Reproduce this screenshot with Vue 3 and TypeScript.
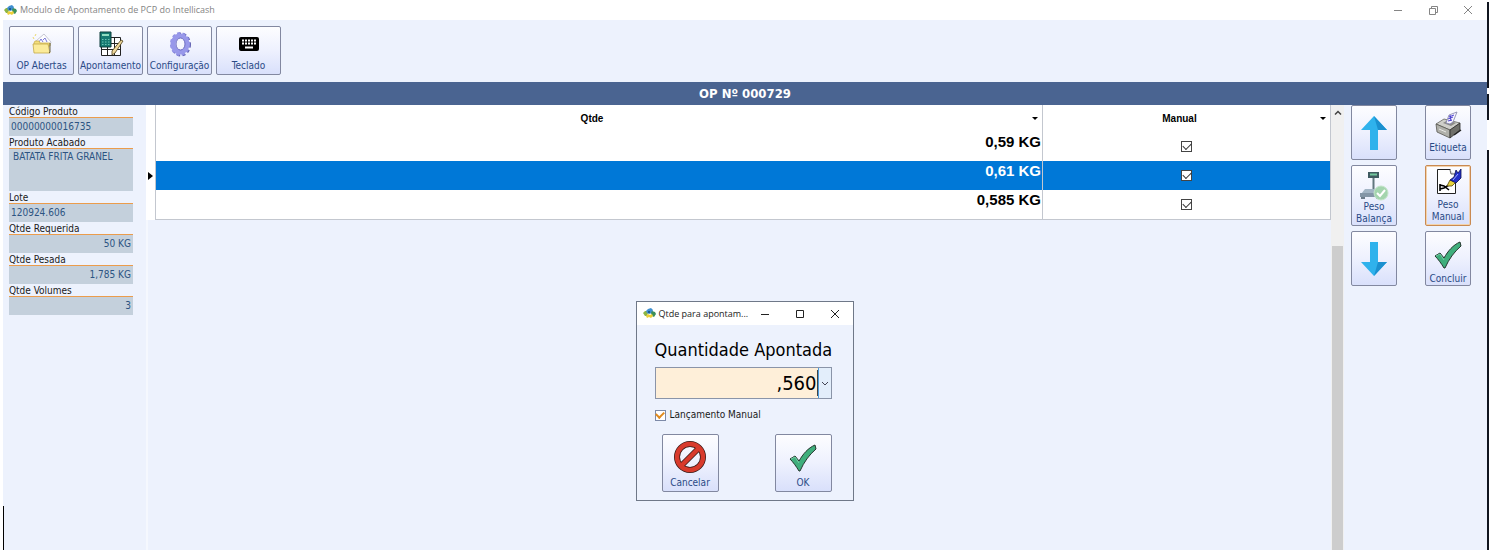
<script setup lang="ts">
import { ref } from 'vue'

interface Field {
  id: string
  label: string
  value: string
  kind: 'text' | 'memo' | 'number'
}

interface Weighing {
  qty: string
  manual: boolean
}

const fields: Field[] = [
  { id: 'codigo', label: 'Código Produto', value: '00000000016735', kind: 'text' },
  { id: 'produto', label: 'Produto Acabado', value: 'BATATA FRITA GRANEL', kind: 'memo' },
  { id: 'lote', label: 'Lote', value: '120924.606', kind: 'text' },
  { id: 'requerida', label: 'Qtde Requerida', value: '50 KG', kind: 'number' },
  { id: 'pesada', label: 'Qtde Pesada', value: '1,785 KG', kind: 'number' },
  { id: 'volumes', label: 'Qtde Volumes', value: '3', kind: 'number' },
]

const rows = ref<Weighing[]>([
  { qty: '0,59 KG', manual: true },
  { qty: '0,61 KG', manual: true },
  { qty: '0,585 KG', manual: true },
])
const selected = ref(1)
const amount = ref(',560')
const manualEntry = ref(true)
</script>

<template>
  <div class="screen">
    <svg class="defs" width="0" height="0" aria-hidden="true">
      <defs>
        <symbol id="logo" viewBox="0 0 13 11">
          <path d="M0 5l2-2 2 0 1 2-1 3-2 0z" fill="#8db545" />
          <path d="M3 3l2-2 3-1 2 2-1 3-3 1-2-1z" fill="#3f8fd0" />
          <path d="M9 3l3 1 1 2-2 3-2-1-1-3z" fill="#3c8f5a" />
          <path d="M3 8l2-2 2 1 2-1 1 2-2 2-2-1-2 1z" fill="#edcf3a" />
          <path d="M5 3h2v2H5z" fill="#1c5d91" />
        </symbol>
        <symbol id="check" viewBox="0 0 28 28">
          <path d="M1 15l5-3 4 5C14 10 19 4 26 1l1 4C20 11 15 18 11 27h-1C7 22 4 18 1 15z" fill="#3fae7c" stroke="#24352d" stroke-width="1" stroke-linejoin="round" />
          <path d="M2 15l4-2 4 6" fill="none" stroke="#76cda5" stroke-width="1" />
        </symbol>
        <symbol id="arrow" viewBox="0 0 26 34">
          <path d="M13 0l13 14h-9v20H9V14H0z" fill="#2fb2ec" />
          <path d="M13 0l13 14h-9z" fill="#1b90cf" />
        </symbol>
        <symbol id="minus" viewBox="0 0 10 10"><path d="M1 5.5h8" stroke="currentColor" fill="none" /></symbol>
        <symbol id="cross" viewBox="0 0 10 10"><path d="M1 1l8 8M9 1l-8 8" stroke="currentColor" fill="none" /></symbol>
      </defs>
    </svg>

    <div class="window">
      <header class="titlebar">
        <svg class="logo"><use href="#logo" /></svg>
        <h1>Modulo de Apontamento de PCP do Intellicash</h1>
        <button class="caption" aria-label="Minimizar"><svg><use href="#minus" /></svg></button>
        <button class="caption" aria-label="Restaurar">
          <svg viewBox="0 0 10 10"><path d="M1.5 3.5h6v6h-6zM3.500 3V1.500h6v6H8" stroke="currentColor" fill="none" /></svg>
        </button>
        <button class="caption" aria-label="Fechar"><svg><use href="#cross" /></svg></button>
      </header>

      <nav class="toolbar">
        <button class="tile">
          <svg class="icon" viewBox="0 0 26 26">
            <path d="M7 10l8-7 7 8-3 9H8z" fill="#fdfdff" stroke="#b9b9c6" stroke-width=".8" />
            <path d="M10 11l2-3 2 3m0-2l2-2 2 4" stroke="#7b79d6" fill="none" />
            <path d="M5 12l1-2h4l1 2h10v3H5z" fill="#f3de7c" stroke="#c9ae4e" stroke-width=".8" />
            <path d="M4 13h15l2 9H5z" fill="#fbeb9a" stroke="#c4aa4a" stroke-width=".8" />
            <path d="M21 12v9l-1 1" stroke="#6b6448" fill="none" />
            <path d="M7 3l-1 2m-2 1l1 2" stroke="#ecd96e" fill="none" />
          </svg>
          <span>OP Abertas</span>
        </button>
        <button class="tile">
          <svg class="icon" viewBox="0 0 26 26">
            <path d="M3.500 6.500h19v18h-19zM4 12.500h18M4 18.500h18M9.500 6v18M16.500 6v18" fill="#fff" stroke="#222" />
            <path d="M2 1h11v15H2z" fill="#157a72" stroke="#0c3c3a" />
            <path d="M4 3h7v2H4z" fill="#8fdcc0" />
            <path d="M4 8.500h8M4 11h8M4 13.500h8" stroke="#6cc4b4" stroke-dasharray="1.500 1.500" />
            <path d="M23 9l2 1-8 12-3 2v-4z" fill="#eed79a" stroke="#4b3d18" stroke-width=".8" />
          </svg>
          <span>Apontamento</span>
        </button>
        <button class="tile">
          <svg class="icon" viewBox="0 0 26 26">
            <ellipse cx="14" cy="13.500" rx="9" ry="11" fill="none" stroke="#6464b4" stroke-width="2" stroke-dasharray="3 2.500" />
            <ellipse cx="13" cy="13" rx="9" ry="11" fill="none" stroke="#8f90e4" stroke-width="2" stroke-dasharray="3 2.500" />
            <ellipse cx="13" cy="13" rx="7" ry="8" fill="none" stroke="#9898ea" stroke-width="5" />
            <ellipse cx="13.500" cy="13" rx="4.500" ry="6" fill="#f5f6fe" stroke="#6c6cc0" />
          </svg>
          <span>Configuração</span>
        </button>
        <button class="tile">
          <svg class="icon" viewBox="0 0 26 26">
            <rect x="3" y="6" width="20" height="14" rx="2" fill="#000" />
            <path d="M6 9.500h14M6 12.500h14" stroke="#fff" stroke-width="2" stroke-dasharray="2 1" />
            <path d="M9 16.500h8" stroke="#fff" stroke-width="2" />
          </svg>
          <span>Teclado</span>
        </button>
      </nav>

      <h2 class="banner">OP Nº 000729</h2>

      <main class="body">
        <form class="side">
          <div v-for="f in fields" :key="f.id" class="field">
            <label :for="f.id">{{ f.label }}</label>
            <textarea v-if="f.kind === 'memo'" :id="f.id" class="box memo" :value="f.value" readonly></textarea>
            <input v-else :id="f.id" class="box" :class="f.kind" type="text" :value="f.value" readonly />
          </div>
        </form>

        <section class="grid">
          <table>
            <colgroup>
              <col class="c-mark" />
              <col />
              <col class="c-manual" />
            </colgroup>
            <thead>
              <tr>
                <th class="mark"></th>
                <th><div class="head"><span>Qtde</span><button aria-label="Filtrar Qtde"></button></div></th>
                <th><div class="head"><span>Manual</span><button aria-label="Filtrar Manual"></button></div></th>
              </tr>
            </thead>
            <tbody>
              <tr v-for="(r, i) in rows" :key="i" :class="{ current: i === selected }" @click="selected = i">
                <td class="mark"><i v-if="i === selected"></i></td>
                <td class="qty">{{ r.qty }}</td>
                <td class="tick"><input v-model="r.manual" class="cb" type="checkbox" aria-label="Manual" /></td>
              </tr>
            </tbody>
          </table>
        </section>

        <div class="scroll">
          <button aria-label="Rolar para cima"><svg viewBox="0 0 8 5"><path d="M1 4.500l3-3 3 3" fill="none" stroke="#444" stroke-width="1.500" /></svg></button>
          <div class="thumb"></div>
        </div>

        <aside class="actions">
          <button class="tile solo" aria-label="Anterior"><svg class="arrow"><use href="#arrow" /></svg></button>
          <button class="tile raised">
            <svg class="icon" viewBox="0 0 28 28">
              <path d="M2 13l8-5 16 4-10 7z" fill="#cfcfca" stroke="#66665f" stroke-width=".8" />
              <path d="M2 13l14 6v8L3 21z" fill="#b0b0aa" stroke="#55554f" stroke-width=".8" />
              <path d="M16 19l10-7v7l-10 8z" fill="#6f6f69" stroke="#2c2c2a" stroke-width=".8" />
              <path d="M9 12l8 3 5-3-8-3z" fill="#8c8c88" />
              <path d="M12 12l3-8 8-3-4 10-3 2z" fill="#f6f5ff" stroke="#8080a8" stroke-width=".8" />
              <path d="M15 6l5-2m-6 4l5-2m-5 4l4-1m-2-5l1 6" stroke="#4a3fd0" stroke-width="1" />
              <path d="M5 18l7 3" stroke="#e8e8e4" />
              <path d="M20 24l7-5" stroke="#222" stroke-width="1.500" />
            </svg>
            <span>Etiqueta</span>
          </button>
          <button class="tile low">
            <svg class="icon wide" viewBox="0 0 30 30">
              <rect x="9" y="1" width="11" height="6" fill="#3f5b60" />
              <path d="M11 3.500h7" stroke="#72c79c" stroke-width="2" />
              <path d="M14.500 7v12" stroke="#61777e" stroke-width="2" />
              <path d="M6 18h16l3 5H2z" fill="#a3b5c5" />
              <path d="M1 22h22v4H1z" fill="#8496a7" />
              <path d="M2 26h4v2H2zm15 0h4v2h-4z" fill="#6c7c8a" />
              <circle cx="22" cy="22" r="7" fill="#a4d5ae" stroke="#c4e4ca" />
              <path d="M18 22l3 3 5-6" fill="none" stroke="#fff" stroke-width="2" />
            </svg>
            <span>Peso Balança</span>
          </button>
          <button class="tile hot">
            <svg class="icon" viewBox="0 0 28 28">
              <path d="M3.500 1.500h14l4 4v20h-18z" fill="#fff" />
              <path d="M3.500 25.500v-24h13M21.500 15v10.500h-18" fill="none" stroke="#222" stroke-width="1" />
              <path d="M16 2l1 4h4" fill="#e3e3e3" stroke="#444" stroke-width=".8" />
              <path d="M6 16v7M6 17l4 1 5 4M6 21l4-1 5-3" fill="none" stroke="#000" stroke-width="1.600" />
              <path d="M13 18l3-6 6 2-4 4z" fill="#e6d23b" stroke="#51430f" stroke-width=".8" />
              <path d="M16 12l4-3 2-7 2 3 3-4v9l-5 5z" fill="#2330c8" stroke="#0b1050" stroke-width=".8" />
              <path d="M19 12l5-6" stroke="#9cacff" />
            </svg>
            <span>Peso Manual</span>
          </button>
          <button class="tile solo" aria-label="Próximo"><svg class="arrow down"><use href="#arrow" /></svg></button>
          <button class="tile low"><svg class="icon gap"><use href="#check" /></svg><span>Concluir</span></button>
        </aside>
      </main>
    </div>

    <div class="edge"><i></i><b></b><i></i><b></b><i></i></div>
    <div class="notch"></div>

    <div class="overlay">
      <section class="dialog" role="dialog" aria-labelledby="dialog-title">
        <header>
          <svg class="logo"><use href="#logo" /></svg>
          <h3 id="dialog-title">Qtde para apontam...</h3>
          <button class="caption" aria-label="Minimizar"><svg><use href="#minus" /></svg></button>
          <button class="caption" aria-label="Maximizar">
            <svg viewBox="0 0 10 10"><path d="M1.500 1.500h7v7h-7z" stroke="currentColor" fill="none" /></svg>
          </button>
          <button class="caption" aria-label="Fechar"><svg><use href="#cross" /></svg></button>
        </header>
        <form class="content" @submit.prevent>
          <label class="big" for="amount">Quantidade Apontada</label>
          <div class="combo">
            <input id="amount" v-model="amount" type="text" />
            <i></i>
            <button type="button" aria-label="Calculadora"><svg viewBox="0 0 8 5"><path d="M1 1l3 3 3-3" fill="none" stroke="#445" /></svg></button>
          </div>
          <label class="option"><input v-model="manualEntry" class="cb orange" type="checkbox" />Lançamento Manual</label>
          <div class="buttons">
            <button class="tile" type="button">
              <svg class="icon" viewBox="0 0 34 34">
                <circle cx="17" cy="17" r="13" fill="none" stroke="#3a1a17" stroke-width="6" />
                <path d="M8 26L26 8" stroke="#3a1a17" stroke-width="6" />
                <circle cx="17" cy="17" r="13" fill="none" stroke="#d83a2c" stroke-width="4.500" />
                <path d="M8 26L26 8" stroke="#d83a2c" stroke-width="4.500" />
              </svg>
              <span>Cancelar</span>
            </button>
            <button class="tile" type="submit"><svg class="icon ok"><use href="#check" /></svg><span>OK</span></button>
          </div>
        </form>
      </section>
    </div>
  </div>
</template>

<style>
body {
  background: #fff;
}
</style>

<style scoped>
* {
  box-sizing: border-box;
}
.screen {
  position: relative;
  display: flex;
  min-height: 100vh;
  padding: 0 0 1px 3px;
  font: 10px/12px 'DejaVu Sans Condensed', 'Noto Sans', sans-serif;
  color: #1a1a1a;
}
.defs {
  position: absolute;
}
button {
  padding: 0;
  border: 0;
  background: none;
  font: inherit;
  color: inherit;
}
h1,
h2,
h3 {
  margin: 0;
  font-weight: normal;
}
.window {
  flex: 1;
  display: flex;
  flex-direction: column;
  background: #edf2fd;
}
.titlebar {
  display: flex;
  align-items: center;
  height: 20px;
  padding: 0 2px 0 1px;
  background: #fff;
  color: #858585;
}
.titlebar h1 {
  flex: 1;
  font: 9px/20px 'Open Sans', sans-serif;
}
.logo {
  flex: none;
  width: 13px;
  height: 11px;
  margin-right: 3px;
}
.caption {
  display: grid;
  place-items: center;
  flex: none;
  width: 35px;
  height: 20px;
}
.caption svg {
  width: 10px;
  height: 10px;
}
.toolbar {
  display: flex;
  gap: 4px;
  height: 62px;
  padding: 6px 6px 7px;
}
.tile {
  display: flex;
  flex-direction: column;
  align-items: center;
  justify-content: flex-end;
  padding-bottom: 2px;
  border: 1px solid #8288a0;
  border-radius: 2px;
  background: linear-gradient(#fdfdff, #eef1fe 50%, #d9e0fb);
  color: #2a4a86;
  line-height: 12px;
}
.toolbar .tile {
  width: 65px;
}
.icon {
  width: 26px;
  height: 26px;
  margin-bottom: 3px;
}
.banner {
  height: 23px;
  background: #4a6491;
  color: #fff;
  font-size: 13px;
  font-weight: bold;
  line-height: 23px;
  text-align: center;
}
.body {
  flex: 1;
  display: flex;
}
.side {
  width: 143px;
  padding: 0 13px 0 6px;
}
.field {
  display: flex;
  flex-direction: column;
}
.field label {
  height: 12px;
  line-height: 14px;
}
.box {
  width: 100%;
  height: 19px;
  padding: 0 2px 1px;
  border: 0;
  border-top: 1px solid #eb9c4c;
  border-radius: 0;
  background: #c4d0dc;
  color: #2c5482;
  font: inherit;
  outline: 0;
}
.memo {
  height: 43px;
  padding: 2px 4px;
  resize: none;
  overflow: hidden;
}
.number {
  text-align: right;
}
.grid {
  flex: 1;
  border-left: 2px solid #f5f8fe;
}
table {
  width: calc(100% + 2px);
  margin-left: -2px;
  table-layout: fixed;
  border-spacing: 0;
  background: #fff;
  font-family: 'Liberation Sans', Arial, sans-serif;
  font-weight: bold;
  color: #000;
}
.c-mark {
  width: 10px;
}
.c-manual {
  width: 288px;
}
th,
td {
  padding: 0;
  border-right: 1px solid #c3c7cf;
}
th {
  height: 27px;
}
.head {
  display: flex;
  align-items: center;
}
.head span {
  flex: 1;
}
.head button {
  display: grid;
  place-items: center;
  width: 14px;
  height: 12px;
}
.head button::before {
  content: '';
  border: 3px solid transparent;
  border-top-color: #000;
  border-bottom: 0;
}
td {
  height: 29px;
}
tr:last-child td:not(.mark) {
  height: 30px;
  border-bottom: 1px solid #c3c7cf;
}
.current td:not(.mark) {
  background: #0078d7;
  color: #fff;
}
td.mark {
  vertical-align: middle;
}
.mark i {
  display: block;
  margin-left: 2px;
  border: 4px solid transparent;
  border-left: 5px solid #000;
  border-right: 0;
}
.qty {
  padding: 1px 1px 0 0;
  font-size: 15px;
  line-height: 18px;
  text-align: right;
  vertical-align: top;
}
.tick {
  text-align: center;
  vertical-align: middle;
}
.cb {
  appearance: none;
  display: inline-grid;
  place-items: center;
  flex: none;
  width: 11px;
  height: 11px;
  margin: 0;
  border: 1px solid #444;
  background: #fff;
  color: #333;
  vertical-align: middle;
}
.cb:checked::before {
  content: '';
  width: 7px;
  height: 4px;
  margin-bottom: 2px;
  border: solid currentColor;
  border-width: 0 0 1px 1px;
  transform: rotate(-45deg);
}
.orange {
  border-color: #7d8aa8;
  color: #e08a1e;
}
.orange:checked::before {
  width: 6px;
  border-width: 0 0 2px 2px;
}
.scroll {
  display: flex;
  flex-direction: column;
  width: 13px;
  padding: 0 1px;
  background: #f0f0f0;
}
.scroll button {
  display: grid;
  place-items: center;
  height: 14px;
  margin-bottom: 127px;
}
.scroll svg {
  width: 8px;
  height: 5px;
}
.thumb {
  flex: 1;
  background: #cdcdcd;
}
.actions {
  display: grid;
  grid-template-columns: 46px 46px;
  grid-template-rows: 55px 61px 55px;
  gap: 5px 28px;
  width: 143px;
  padding-left: 7px;
}
.actions .icon {
  width: 28px;
  height: 28px;
}
.actions .raised {
  padding-bottom: 5px;
}
.actions .low {
  padding-bottom: 0;
}
.actions .gap {
  margin-bottom: 4px;
}
.actions .wide {
  width: 30px;
  height: 30px;
  margin-bottom: 0;
}
.actions .solo {
  justify-content: center;
  padding: 0;
}
.arrow {
  width: 26px;
  height: 34px;
}
.down {
  transform: scaleY(-1);
}
.hot {
  border-color: #c98a52;
  box-shadow: inset 0 0 0 1px #f3d3ac;
}
.edge {
  display: flex;
  flex-direction: column;
  width: 2px;
  padding-top: 2px;
}
.edge i {
  height: 86px;
  background: #10151f;
}
.edge b {
  height: 6px;
}
.edge i:nth-child(3) {
  height: 26px;
}
.edge b:nth-child(4) {
  height: 30px;
}
.edge i:last-child {
  flex: 1;
}
.notch {
  position: absolute;
  left: 3px;
  bottom: 1px;
  width: 1px;
  height: 44px;
  background: #000;
}
.overlay {
  position: absolute;
  inset: 0;
  display: flex;
  justify-content: center;
  align-items: flex-start;
  padding-top: 301px;
  pointer-events: none;
}
.dialog {
  width: 218px;
  border: 1px solid #6f7888;
  background: #edf2fd;
  pointer-events: auto;
}
.dialog header {
  display: flex;
  align-items: center;
  height: 23px;
  padding-left: 6px;
  background: #fff;
  color: #222;
}
.dialog h3 {
  flex: 1;
  min-width: 0;
  font: 9px/20px 'Open Sans', sans-serif;
  white-space: nowrap;
}
.content {
  display: flex;
  flex-direction: column;
  padding: 12px 21px 8px 18px;
}
.big {
  font-size: 18px;
  line-height: 26px;
  white-space: nowrap;
  color: #000;
}
.combo {
  display: flex;
  align-items: center;
  height: 32px;
  margin-top: 4px;
  border: 1px solid #8a94a8;
  background: #feefd9;
}
.combo input {
  flex: 1;
  min-width: 0;
  padding: 0;
  border: 0;
  background: none;
  color: #000;
  font: 20px/28px 'DejaVu Sans Condensed', 'Noto Sans', sans-serif;
  text-align: right;
  outline: 0;
}
.combo i {
  width: 1px;
  height: 26px;
  background: #444;
}
.combo button {
  display: grid;
  place-items: center;
  width: 13px;
  height: 30px;
  border-left: 1px solid #4a9bdc;
  background: #e3eefb;
}
.combo svg {
  width: 8px;
  height: 5px;
}
.option {
  display: flex;
  align-items: center;
  gap: 4px;
  margin-top: 10px;
}
.buttons {
  display: flex;
  justify-content: space-between;
  margin-top: 13px;
  padding-left: 7px;
}
.buttons .tile {
  width: 57px;
  height: 58px;
}
.buttons .icon {
  width: 34px;
  height: 34px;
}
.buttons .ok {
  width: 28px;
  height: 28px;
  margin-bottom: 5px;
}
</style>
